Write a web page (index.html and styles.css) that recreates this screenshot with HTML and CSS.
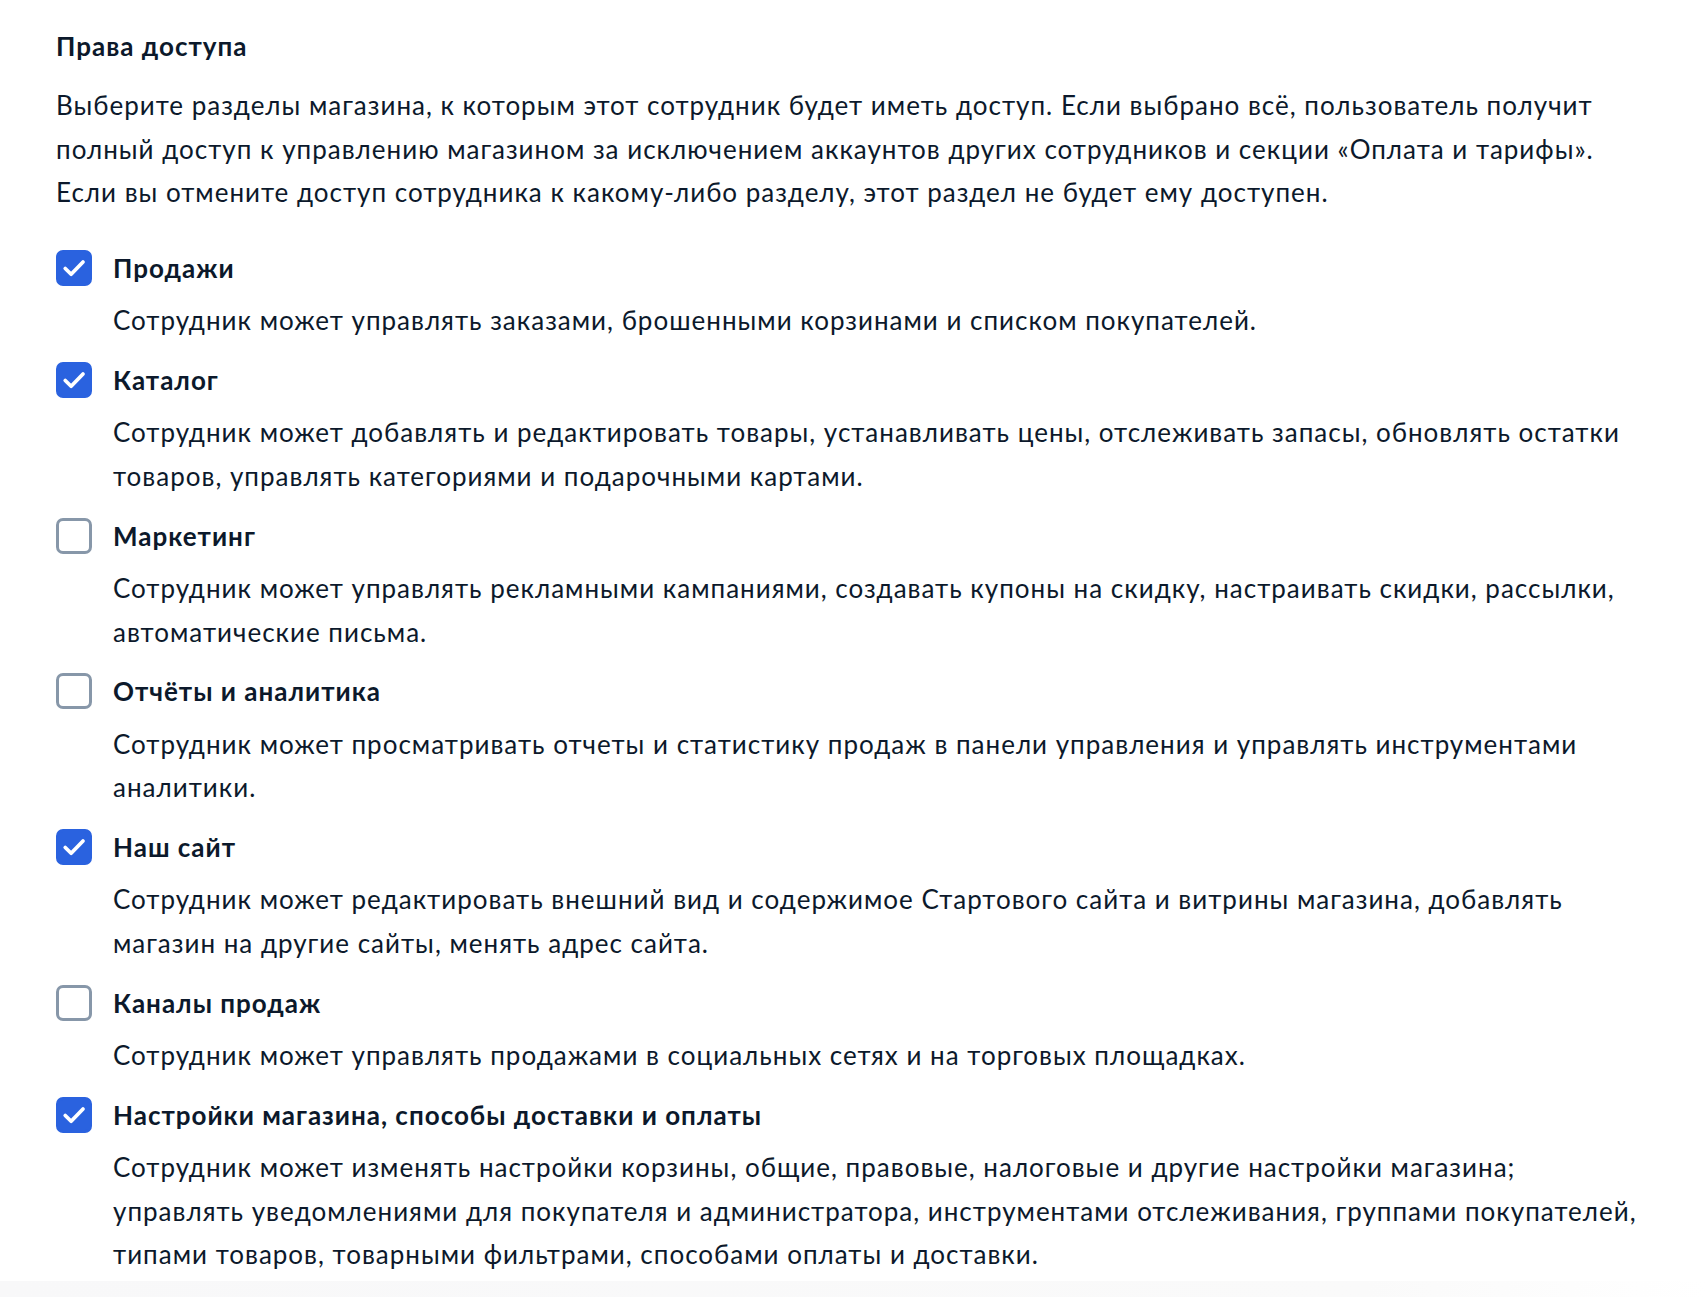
FILE: index.html
```html
<!DOCTYPE html>
<html>
<head>
  <title>Права доступа</title>
  <link rel="stylesheet" href="styles.css">
</head>
<body>
  <div class="access">
    <h2 class="access-title">Права доступа</h2>
    <p class="access-intro">Выберите разделы магазина, к которым этот сотрудник будет иметь доступ. Если выбрано всё, пользователь получит полный доступ к управлению магазином за исключением аккаунтов других сотрудников и секции «Оплата и тарифы». Если вы отмените доступ сотрудника к какому-либо разделу, этот раздел не будет ему доступен.</p>

    <div class="perm-list">
      <label class="perm">
        <input type="checkbox" checked>
        <span class="box"><svg viewBox="0 0 24 24"><path d="M5 12.4l4.7 4.6L19.2 7.2"/></svg></span>
        <span class="perm-name">Продажи</span>
        <span class="perm-desc">Сотрудник может управлять заказами, брошенными корзинами и списком покупателей.</span>
      </label>
      <label class="perm">
        <input type="checkbox" checked>
        <span class="box"><svg viewBox="0 0 24 24"><path d="M5 12.4l4.7 4.6L19.2 7.2"/></svg></span>
        <span class="perm-name">Каталог</span>
        <span class="perm-desc">Сотрудник может добавлять и редактировать товары, устанавливать цены, отслеживать запасы, обновлять остатки товаров, управлять категориями и подарочными картами.</span>
      </label>
      <label class="perm">
        <input type="checkbox">
        <span class="box"><svg viewBox="0 0 24 24"><path d="M5 12.4l4.7 4.6L19.2 7.2"/></svg></span>
        <span class="perm-name">Маркетинг</span>
        <span class="perm-desc">Сотрудник может управлять рекламными кампаниями, создавать купоны на скидку, настраивать скидки, рассылки, автоматические письма.</span>
      </label>
      <label class="perm">
        <input type="checkbox">
        <span class="box"><svg viewBox="0 0 24 24"><path d="M5 12.4l4.7 4.6L19.2 7.2"/></svg></span>
        <span class="perm-name">Отчёты и аналитика</span>
        <span class="perm-desc">Сотрудник может просматривать отчеты и статистику продаж в панели управления и управлять инструментами аналитики.</span>
      </label>
      <label class="perm">
        <input type="checkbox" checked>
        <span class="box"><svg viewBox="0 0 24 24"><path d="M5 12.4l4.7 4.6L19.2 7.2"/></svg></span>
        <span class="perm-name">Наш сайт</span>
        <span class="perm-desc">Сотрудник может редактировать внешний вид и содержимое Стартового сайта и витрины магазина, добавлять магазин на другие сайты, менять адрес сайта.</span>
      </label>
      <label class="perm">
        <input type="checkbox">
        <span class="box"><svg viewBox="0 0 24 24"><path d="M5 12.4l4.7 4.6L19.2 7.2"/></svg></span>
        <span class="perm-name">Каналы продаж</span>
        <span class="perm-desc">Сотрудник может управлять продажами в социальных сетях и на торговых площадках.</span>
      </label>
      <label class="perm">
        <input type="checkbox" checked>
        <span class="box"><svg viewBox="0 0 24 24"><path d="M5 12.4l4.7 4.6L19.2 7.2"/></svg></span>
        <span class="perm-name">Настройки магазина, способы доставки и оплаты</span>
        <span class="perm-desc">Сотрудник может изменять настройки корзины, общие, правовые, налоговые и другие настройки магазина; управлять уведомлениями для покупателя и администратора, инструментами отслеживания, группами покупателей, типами товаров, товарными фильтрами, способами оплаты и доставки.</span>
      </label>
    </div>
  </div>
  <div class="footer-bar"></div>
</body>
</html>
```

FILE: styles.css
```css
body {
    margin: 0;
    font-family: Lato, "Open Sans", sans-serif;
    color: #0c192b;
    background-color: #fff;
    letter-spacing: 1px;
  }

  .access {
    padding: 24px 56px 0 56px;
  }

  .access-title {
    margin: 0;
    font-size: 26px;
    font-weight: 700;
    line-height: 44px;
  }

  .access-intro {
    margin: 16px 0 0 0;
    font-size: 26px;
    line-height: 43.6px;
  }

  .perm-list {
    display: flex;
    flex-direction: column;
    gap: 15px;
    margin-top: 31px;
  }

  .perm {
    display: grid;
    grid-template-columns: 36px 1fr;
    column-gap: 21px;
    row-gap: 9.5px;
    align-items: center;
    cursor: pointer;
  }

  .perm input {
    display: none;
  }

  .perm .box {
    grid-column: 1;
    grid-row: 1;
    box-sizing: border-box;
    width: 36px;
    height: 36px;
    border: 3px solid #8797a9;
    border-radius: 7px;
    background-color: #fff;
  }

  .perm .box svg {
    display: none;
    width: 100%;
    height: 100%;
    fill: none;
    stroke: #fff;
    stroke-width: 3;
    stroke-linecap: round;
    stroke-linejoin: round;
  }

  .perm input:checked + .box {
    border-color: #2a62df;
    background-color: #2a62df;
  }

  .perm input:checked + .box svg {
    display: block;
  }

  .perm-name {
    grid-column: 2;
    grid-row: 1;
    font-size: 26px;
    font-weight: 700;
    line-height: 44px;
  }

  .perm-desc {
    grid-column: 2;
    grid-row: 2;
    font-size: 26px;
    line-height: 43.6px;
  }

  .footer-bar {
    height: 16px;
    margin-top: 4px;
    background: linear-gradient(to right, #f8f8f9 0%, #fafafa 80%, #fff 100%);
  }
```
